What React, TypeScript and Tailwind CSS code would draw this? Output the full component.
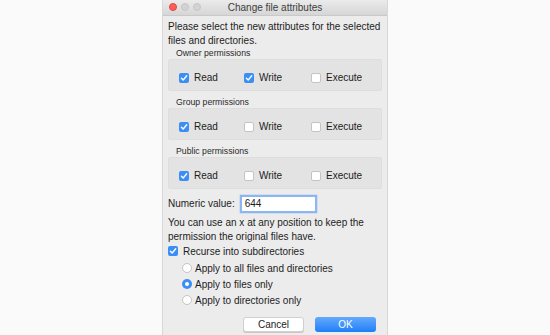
import { ReactNode } from "react";

type Perm = { label: string; checked: boolean };

const groups: { title: string; perms: Perm[] }[] = [
  {
    title: "Owner permissions",
    perms: [
      { label: "Read", checked: true },
      { label: "Write", checked: true },
      { label: "Execute", checked: false },
    ],
  },
  {
    title: "Group permissions",
    perms: [
      { label: "Read", checked: true },
      { label: "Write", checked: false },
      { label: "Execute", checked: false },
    ],
  },
  {
    title: "Public permissions",
    perms: [
      { label: "Read", checked: true },
      { label: "Write", checked: false },
      { label: "Execute", checked: false },
    ],
  },
];

function CheckBox({ checked }: { checked: boolean }) {
  if (!checked) {
    return (
      <span className="block h-[10px] w-[10px] shrink-0 rounded-[2px] border border-[#c4c4c4] bg-white" />
    );
  }
  return (
    <span className="flex h-[10px] w-[10px] shrink-0 items-center justify-center rounded-[2px] bg-[#3a8ef5]">
      <svg width="8" height="8" viewBox="0 0 8 8" fill="none">
        <path d="M1.4 4.2 L3.2 6 L6.7 1.8" stroke="white" strokeWidth="1.4" strokeLinecap="round" strokeLinejoin="round" />
      </svg>
    </span>
  );
}

function Radio({ checked }: { checked: boolean }) {
  if (!checked) {
    return <span className="block h-[10px] w-[10px] shrink-0 rounded-full border border-[#c4c4c4] bg-white" />;
  }
  return (
    <span className="flex h-[10px] w-[10px] shrink-0 items-center justify-center rounded-full bg-[#3a8ef5]">
      <span className="block h-[4px] w-[4px] rounded-full bg-white" />
    </span>
  );
}

function Check({ checked, children }: { checked: boolean; children: ReactNode }) {
  return (
    <div className="flex items-center gap-[5px]">
      <CheckBox checked={checked} />
      <span>{children}</span>
    </div>
  );
}

export default function App() {
  const colWidths = ["w-[65px]", "w-[67px]", "w-[60px]"];

  return (
    <div
      className="flex h-[335px] w-[550px] justify-center overflow-hidden bg-[#fafafa] text-[10px] text-[#1c1c1c]"
      style={{ fontFamily: '"Liberation Sans", Arial, sans-serif' }}
    >
      <div className="flex h-[335px] w-[226px] flex-col border-x border-[#d8d8d8] bg-[#ececec]">
        {/* title bar */}
        <div className="relative flex h-[16px] shrink-0 items-center justify-center border-b border-[#c9c9c9] bg-gradient-to-b from-[#ebebeb] to-[#d6d6d6]">
          <div className="absolute left-[6px] top-[3px] flex gap-[4px]">
            <span className="block h-[8px] w-[8px] rounded-full border border-[#e2463f] bg-[#fc605c]" />
            <span className="block h-[8px] w-[8px] rounded-full border border-[#c6c6c6] bg-[#d3d3d3]" />
            <span className="block h-[8px] w-[8px] rounded-full border border-[#c6c6c6] bg-[#d3d3d3]" />
          </div>
          <span className="text-[10px] text-[#3d3d3d]">Change file attributes</span>
        </div>

        <div className="flex flex-col px-[5px]">
          <p className="mt-[4px] leading-[14px]">
            Please select the new attributes for the selected
            <br />
            files and directories.
          </p>

          {groups.map((g, i) => (
            <div key={g.title} className="flex flex-col">
              <div className={`${i === 0 ? "pt-0" : "pt-[6px]"} pl-[8px] text-[8.7px] leading-[11px] text-[#2a2a2a]`}>
                {g.title}
              </div>
              <div className="flex h-[32px] items-start rounded-[2px] border border-[#dedede] bg-[#e3e3e3] pl-[10px] pt-[10px]">
                {g.perms.map((p, j) => (
                  <div key={p.label} className={colWidths[j]}>
                    <Check checked={p.checked}>{p.label}</Check>
                  </div>
                ))}
              </div>
            </div>
          ))}

          <div className="mt-[5px] flex h-[19px] items-center">
            <span>Numeric value:</span>
            <div className="ml-[5px] flex h-[18px] w-[77px] items-center border-2 border-[#8bb6f2] bg-white pl-[3px] shadow-[0_0_1px_#5b9af0]">
              644
            </div>
          </div>

          <p className="mt-[3px] leading-[14px]">
            You can use an x at any position to keep the
            <br />
            permission the original files have.
          </p>

          <div className="mt-0 flex h-[14px] items-center">
            <Check checked>Recurse into subdirectories</Check>
          </div>

          <div className="mt-[2px] flex flex-col pl-[14px]">
            {["Apply to all files and directories", "Apply to files only", "Apply to directories only"].map((t, i) => (
              <div key={t} className="flex h-[16px] items-center gap-[3px]">
                <Radio checked={i === 1} />
                <span>{t}</span>
              </div>
            ))}
          </div>

          <div className="mt-[9px] flex justify-end gap-[11px] pr-[6px]">
            <button
              type="button"
              className="flex h-[15px] w-[61px] items-center justify-center rounded-[3px] border border-[#d0d0d0] bg-white text-[10px] shadow-[0_1px_0_#c8c8c8]"
            >
              Cancel
            </button>
            <button
              type="button"
              className="flex h-[15px] w-[61px] items-center justify-center rounded-[3px] bg-gradient-to-b from-[#62a9fb] to-[#1c7ff7] text-[10px] text-white"
            >
              OK
            </button>
          </div>
        </div>
      </div>
    </div>
  );
}
